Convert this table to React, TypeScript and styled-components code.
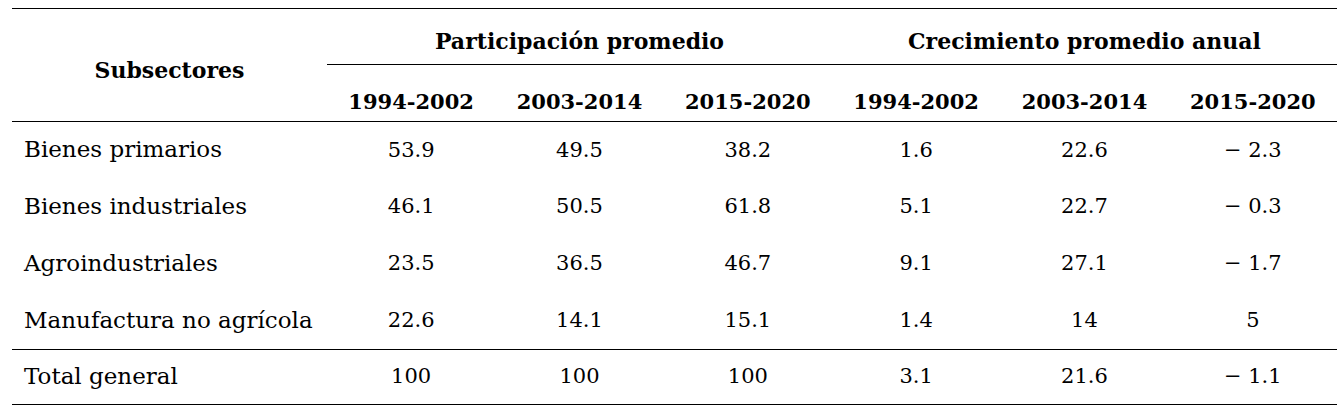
import styled, { createGlobalStyle } from "styled-components";

const GlobalStyle = createGlobalStyle`
  html, body {
    margin: 0;
    padding: 0;
    background: #ffffff;
  }
  body {
    font-family: "DejaVu Serif", serif;
    color: #000000;
  }
`;

const Page = styled.div`
  padding: 8px 4px 0 12px;
`;

const Table = styled.table`
  width: 1325px;
  border-collapse: collapse;
  table-layout: fixed;
  border-top: 1px solid #000;
  border-bottom: 1px solid #000;
`;

const HeadRow = styled.tr<{ $h: number }>`
  height: ${(p) => p.$h}px;
`;

const HeadCell = styled.th<{ $size: number; $push: number }>`
  padding: ${(p) => p.$push}px 0 0;
  font-size: ${(p) => p.$size}px;
  font-weight: 700;
  line-height: 1.2;
  text-align: center;
  vertical-align: middle;
  border-bottom: 1px solid #000;
  white-space: nowrap;
`;

const Row = styled.tr<{ $h: number; $rule?: boolean }>`
  height: ${(p) => p.$h}px;
  border-top: ${(p) => (p.$rule ? "1px solid #000" : "none")};
`;

const Label = styled.td`
  padding: 0 0 0 12px;
  font-size: 23px;
  line-height: 1.2;
  text-align: left;
  vertical-align: middle;
  white-space: nowrap;
`;

const Value = styled.td`
  padding: 0;
  font-size: 21px;
  line-height: 1.2;
  text-align: center;
  vertical-align: middle;
`;

const periods = ["1994-2002", "2003-2014", "2015-2020"];

const rows: [string, string[]][] = [
  ["Bienes primarios", ["53.9", "49.5", "38.2", "1.6", "22.6", "− 2.3"]],
  ["Bienes industriales", ["46.1", "50.5", "61.8", "5.1", "22.7", "− 0.3"]],
  ["Agroindustriales", ["23.5", "36.5", "46.7", "9.1", "27.1", "− 1.7"]],
  ["Manufactura no agrícola", ["22.6", "14.1", "15.1", "1.4", "14", "5"]],
];

const total: string[] = ["100", "100", "100", "3.1", "21.6", "− 1.1"];

export default function App() {
  return (
    <Page>
      <GlobalStyle />
      <Table>
        <colgroup>
          <col style={{ width: 315 }} />
          {[0, 1, 2, 3, 4, 5].map((i) => (
            <col key={i} />
          ))}
        </colgroup>
        <thead>
          <HeadRow $h={56}>
            <HeadCell rowSpan={2} $size={22} $push={10}>
              Subsectores
            </HeadCell>
            <HeadCell colSpan={3} $size={22} $push={10}>
              Participación promedio
            </HeadCell>
            <HeadCell colSpan={3} $size={22} $push={10}>
              Crecimiento promedio anual
            </HeadCell>
          </HeadRow>
          <HeadRow $h={57}>
            {[...periods, ...periods].map((p, i) => (
              <HeadCell key={i} $size={21} $push={17}>
                {p}
              </HeadCell>
            ))}
          </HeadRow>
        </thead>
        <tbody>
          {rows.map(([name, vals]) => (
            <Row key={name} $h={57}>
              <Label>{name}</Label>
              {vals.map((v, i) => (
                <Value key={i}>{v}</Value>
              ))}
            </Row>
          ))}
          <Row $h={55} $rule>
            <Label>Total general</Label>
            {total.map((v, i) => (
              <Value key={i}>{v}</Value>
            ))}
          </Row>
        </tbody>
      </Table>
    </Page>
  );
}
